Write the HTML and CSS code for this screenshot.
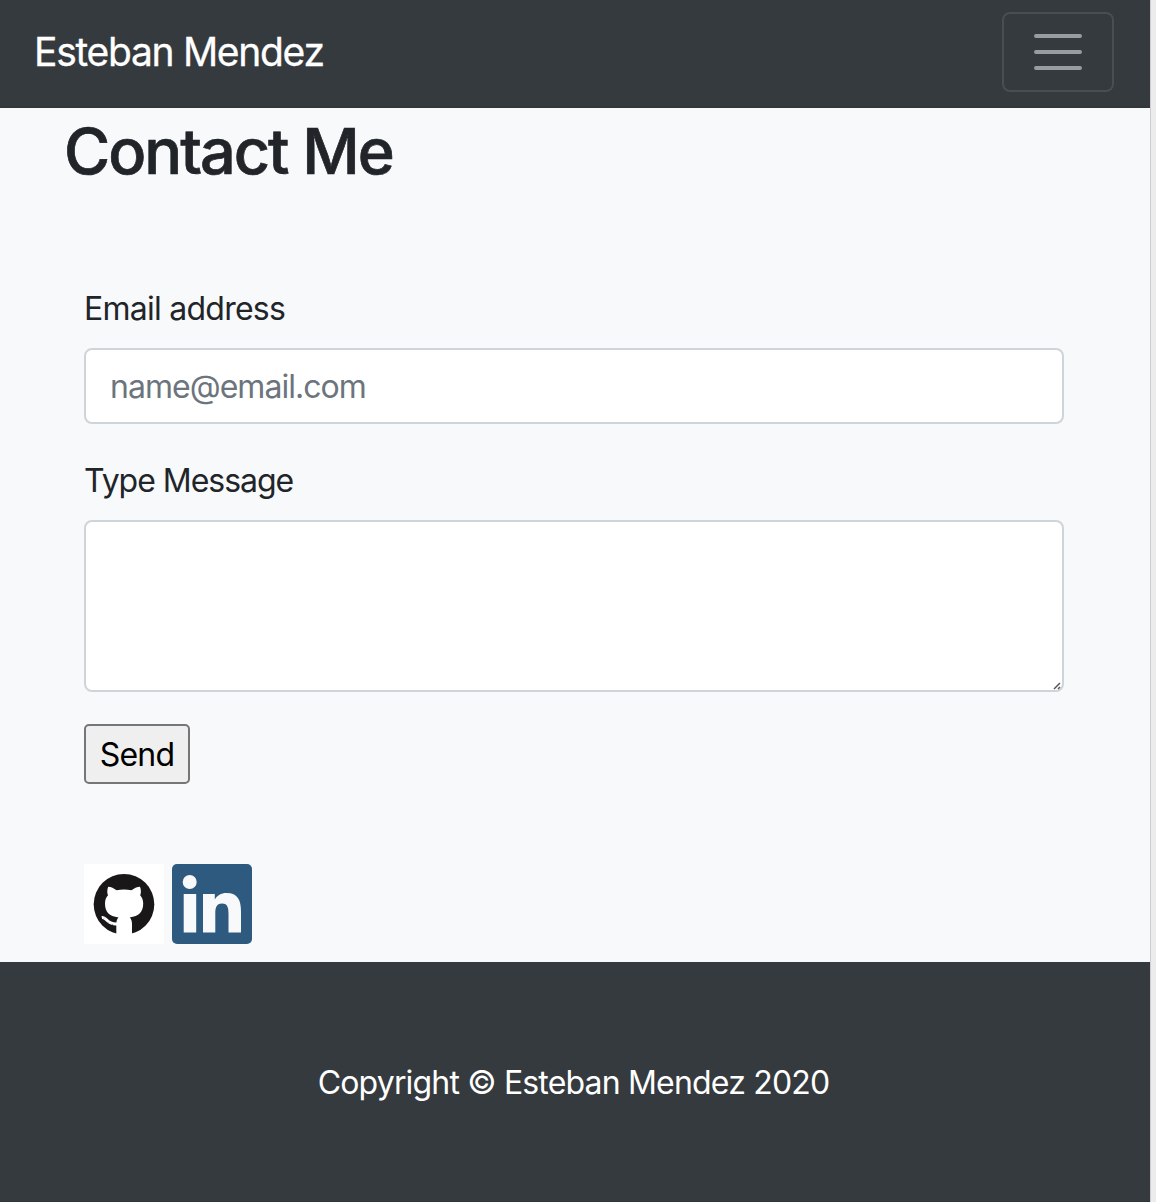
FILE: index.html
```html
<!DOCTYPE html>
<html lang="en">
<head>
<meta charset="utf-8">
<title>Contact Me</title>
<link rel="stylesheet" href="styles.css">
</head>
<body>
<div class="page">
  <nav class="navbar">
    <a class="brand">Esteban Mendez</a>
    <button class="toggler" type="button" aria-label="Toggle navigation">
      <svg width="60" height="60" viewBox="0 0 30 30"><path stroke="#9a9da0" stroke-width="2" stroke-linecap="round" d="M4 7h22M4 15h22M4 23h22"/></svg>
    </button>
  </nav>
  <main class="content">
    <h1 class="title">Contact Me</h1>
    <form class="form">
      <label class="label label-email" for="email">Email address</label>
      <input class="control" id="email" type="email" placeholder="name@email.com">
      <label class="label label-message" for="message">Type Message</label>
      <div class="message-wrap">
        <textarea class="control message" id="message"></textarea>
        <svg class="grip" width="8" height="8" viewBox="0 0 8 8"><path d="M1 7 7 1M5 7 7 5" stroke="#555" stroke-width="1.5"/></svg>
      </div>
      <button class="send" type="button">Send</button>
    </form>
    <div class="social">
      <a class="github" aria-label="GitHub">
        <svg width="80" height="80" viewBox="0 0 80 80">
          <circle cx="40" cy="40.300" r="30.300" fill="#191717"/>
          <path fill="#fff" d="M32.300 72V60C32.300 57 33 55 34.500 53.500C25 52 21 48 21 39.500C21 36 22 33.500 24 31.300C23 29 23 26 24.200 22.800C27 22.800 30 24.500 32.500 26.300Q40 24.500 47.500 26.300C50 24.500 53 22.800 56 22.800C57.200 26 57.200 29 56.200 31.300C58 33.500 59.200 36 59.200 39.500C59.200 48 55 52 45.700 53.500C47.500 55 48 57.500 48 60V72Z"/>
          <path fill="none" stroke="#fff" stroke-width="3" d="M17.800 53.500C23 52.500 22 60.500 33 60"/>
          <path stroke="#191717" stroke-width=".4" d="m21 53.500-1 1M24.500 58 23.500 59M28.500 60v1.500"/>
        </svg>
      </a>
      <a class="linkedin" aria-label="LinkedIn">
        <svg width="80" height="80" viewBox="0 0 80 80">
          <rect width="80" height="80" rx="5" fill="#2f5a80"/>
          <g fill="#f8f9fb"><circle cx="17.700" cy="18" r="7"/><path d="M11.700 30h12.500v38.500H11.700zM31 30h11.800v5.500C45.200 31.500 49 29 54.500 29C66 29 69 36.500 69 47.500v21H56.500V50C56.500 44.500 56 39.500 50 39.500C44.200 39.500 43.300 44 43.300 50v18.500H31z"/></g>
        </svg>
      </a>
    </div>
  </main>
  <footer class="footer"><p class="copyright">Copyright © Esteban Mendez 2020</p></footer>
</div>
</body>
</html>
```
FILE: styles.css
```css
* { box-sizing: border-box; }
html { overflow: hidden; }
body {
  margin: 0;
  height: 1202px;
  overflow: hidden;
  background: #ececec;
  color: #212529;
  font: 400 32px/48px Inter, "Liberation Sans", sans-serif;
  letter-spacing: -.82px;
}
.page {
  display: flex;
  flex-direction: column;
  width: 1151px;
  height: 1202px;
  border-right: 1px solid #ccced0;
  background: #f8f9fb;
}
.navbar {
  display: flex;
  justify-content: space-between;
  align-items: center;
  height: 108px;
  padding: 0 36px 4px 34px;
  background: #353a3e;
  border-bottom: 2px solid #323539;
}
.brand {
  padding-top: 2px;
  color: #fff;
  font-size: 39px;
  line-height: 60px;
  letter-spacing: -1.3px;
  -webkit-text-stroke: .3px #fff;
}
.toggler {
  display: flex;
  align-items: center;
  justify-content: center;
  width: 112px;
  height: 80px;
  margin-top: 2px;
  padding: 0;
  border: 2px solid #4a4d52;
  border-radius: 8px;
  background: transparent;
}
.content { display: flex; flex-direction: column; height: 854px; padding: 5px 86px 0 64px; }
.title {
  margin: 0;
  font-size: 63px;
  line-height: 77px;
  font-weight: 500;
  letter-spacing: -2px;
  -webkit-text-stroke: .7px #212529;
}
.form { display: flex; flex-direction: column; align-items: flex-start; padding: 95px 0 0 20px; }
.label { height: 48px; margin-bottom: 15px; }
.label-email { letter-spacing: -.75px; }
.label-message { letter-spacing: -1.02px; }
.control {
  width: 980px;
  height: 76px;
  margin: 0 0 33px;
  padding: 0 24px;
  border: 2px solid #ced4da;
  border-radius: 8px;
  background: #fff;
  font: inherit;
  letter-spacing: -.96px;
  outline: 0;
}
.control::placeholder { color: #6c757d; opacity: 1; }
.message-wrap { position: relative; display: flex; margin-bottom: 32px; }
.message { display: block; height: 172px; margin: 0; resize: none; }
.grip { position: absolute; right: 3px; bottom: 2px; }
.send {
  width: 106px;
  height: 60px;
  padding: 2px 0 0;
  border: 2px solid #767676;
  border-radius: 5px;
  background: #efefef;
  color: #000;
  font: inherit;
  letter-spacing: -.8px;
}
.social { display: flex; gap: 8px; padding: 80px 0 0 20px; }
.social svg { display: block; }
.github { background: #fff; }
.footer { flex: 1; padding: 97px 3px 0 0; background: #353a3e; border-bottom: 1px solid #303338; text-align: center; }
.copyright { margin: 0; color: #fff; }
```
